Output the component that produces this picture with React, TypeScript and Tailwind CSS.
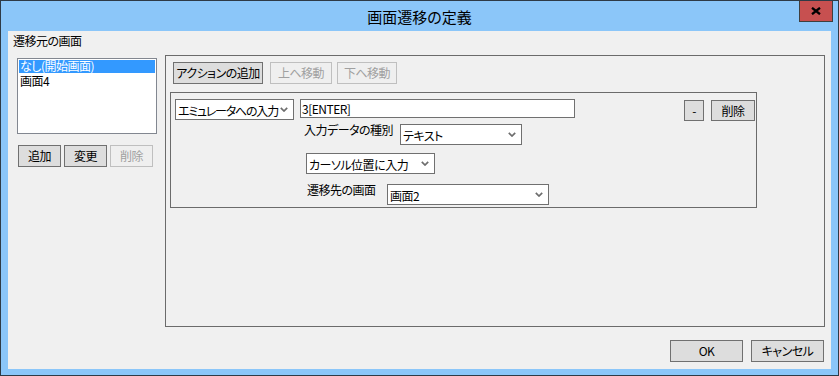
const font =
  "font-['Noto_Sans_CJK_JP','Noto_Sans_CJK_SC',sans-serif] [font-feature-settings:'palt']";

function Chevron() {
  return (
    <svg width="8" height="5" viewBox="0 0 8 5" aria-hidden className="shrink-0">
      <path d="M0.8 0.8 L4 4 L7.2 0.8" fill="none" stroke="#6d6d6d" strokeWidth="1.7" />
    </svg>
  );
}

function Btn({
  children,
  disabled,
  className = "",
}: {
  children: React.ReactNode;
  disabled?: boolean;
  className?: string;
}) {
  const look = disabled
    ? "border-[#bfbfbf] bg-[#efefef] text-[#a0a0a0]"
    : "border-[#707070] bg-[#dddddd] text-black";
  return (
    <div className={`flex shrink-0 items-center justify-center border leading-[12px] ${look} ${className}`}>
      {children}
    </div>
  );
}

function Select({
  value,
  className = "",
  textClass = "",
}: {
  value: string;
  className?: string;
  textClass?: string;
}) {
  return (
    <div
      className={`flex h-[21px] shrink-0 items-center border border-[#707070] bg-white pl-[2px] pr-[5px] leading-[12px] ${className}`}
    >
      <span className={`whitespace-nowrap pt-[2px] ${textClass}`}>{value}</span>
      <span className="ml-auto pl-[2px]">
        <Chevron />
      </span>
    </div>
  );
}

export default function App() {
  return (
    <div
      className={`flex h-[376px] w-[839px] flex-col border border-[#2e3a46] bg-[#8bc6f9] text-[12px] tracking-[-0.5px] text-black ${font}`}
    >
      {/* title bar */}
      <div className="relative flex h-[30px] shrink-0 items-center justify-center">
        <span className="pt-[1px] text-[15px] leading-none tracking-normal">画面遷移の定義</span>
        <div className="absolute right-[5px] top-0 flex h-[21px] w-[34px] items-center justify-center border border-t-0 border-[#3f3f3f] bg-[#c75050]">
          <svg width="10" height="8" viewBox="0 0 10 8" aria-hidden>
            <path d="M1 0.8 L9 7.2 M9 0.8 L1 7.2" stroke="#000" strokeWidth="2.3" />
          </svg>
        </div>
      </div>

      {/* client area */}
      <div className="mx-[7px] flex h-[338px] shrink-0 flex-col bg-[#f0f0f0] pl-[5px] pt-[3px]">
        <div className="h-[13px] leading-[13px]">遷移元の画面</div>

        <div className="mt-[8px] flex">
          {/* source screens */}
          <div className="ml-[4px] flex w-[140px] flex-col pt-[3px]">
            <div className="flex h-[76px] flex-col border border-[#828790] bg-white p-[1px]">
              <div className="h-[13px] whitespace-nowrap bg-[#3399ff] pl-[1px] leading-[12px] text-white">
                なし(開始画面)
              </div>
              <div className="mt-[1px] h-[13px] whitespace-nowrap pl-[1px] leading-[13px]">画面4</div>
            </div>
            <div className="ml-[1px] mt-[11px] flex gap-[3px]">
              <Btn className="h-[22px] w-[43px]">追加</Btn>
              <Btn className="h-[22px] w-[43px]">変更</Btn>
              <Btn disabled className="h-[22px] w-[43px]">
                削除
              </Btn>
            </div>
          </div>

          {/* actions */}
          <div className="ml-[8px] h-[272px] w-[660px] border border-[#6b6b6b] pt-[6px]">
            <div className="flex pl-[7px]">
              <Btn className="h-[22px] w-[90px]">アクションの追加</Btn>
              <Btn disabled className="ml-[7px] h-[22px] w-[62px]">
                上へ移動
              </Btn>
              <Btn disabled className="ml-[5px] h-[22px] w-[60px]">
                下へ移動
              </Btn>
            </div>

            <div className="ml-[4px] mt-[8px] flex h-[116px] w-[587px] items-start border border-[#6b6b6b] pl-[4px] pt-[6px]">
              <Select value="エミュレータへの入力" className="w-[119px]" textClass="tracking-[-1.2px]" />

              <div className="ml-[6px] flex flex-col">
                <div className="flex h-[19px] w-[275px] items-center border border-[#707070] bg-white pl-[1px] leading-[12px]">
                  <span className="pt-[1px]">3[ENTER]</span>
                </div>
                <div className="mt-[6px] flex items-start">
                  <span className="ml-[4px] w-[96px] whitespace-nowrap leading-[12px]">入力データの種別</span>
                  <Select value="テキスト" className="w-[122px]" />
                </div>
                <div className="mt-[8px] flex">
                  <Select value="カーソル位置に入力" className="ml-[6px] w-[129px]" />
                </div>
                <div className="mt-[10px] flex items-start">
                  <span className="ml-[7px] w-[80px] whitespace-nowrap leading-[12px]">遷移先の画面</span>
                  <Select value="画面2" className="w-[162px]" />
                </div>
              </div>

              <div className="ml-auto mr-[1px] mt-[1px] flex gap-[7px]">
                <Btn className="h-[21px] w-[20px]">-</Btn>
                <Btn className="h-[21px] w-[44px]">削除</Btn>
              </div>
            </div>
          </div>
        </div>

        <div className="mt-[13px] flex justify-end gap-[8px] pr-[7px]">
          <Btn className="h-[22px] w-[73px]">OK</Btn>
          <Btn className="h-[22px] w-[73px]">キャンセル</Btn>
        </div>
      </div>
    </div>
  );
}
